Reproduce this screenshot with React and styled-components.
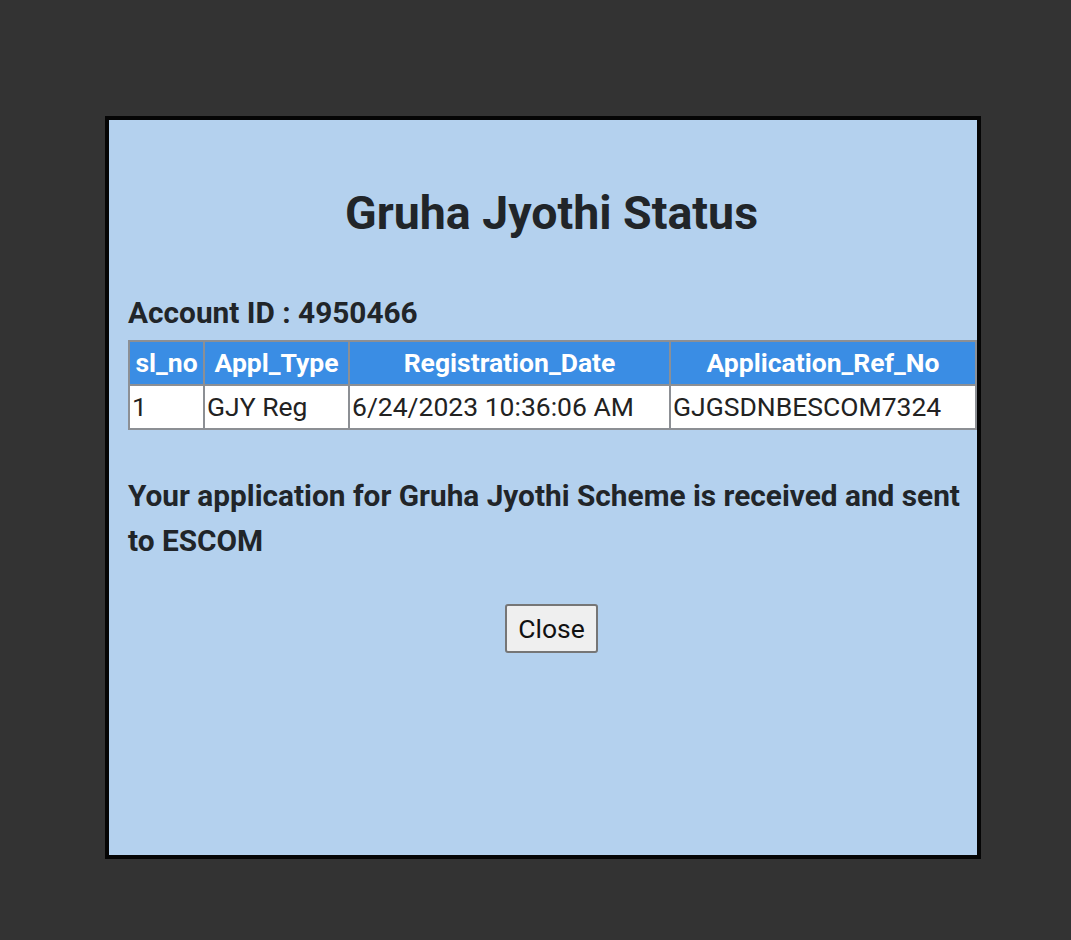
import React from 'react';
import styled, { createGlobalStyle } from 'styled-components';

const GlobalStyle = createGlobalStyle`
  html, body {
    margin: 0;
    padding: 0;
    background: #333333;
  }
`;

const Page = styled.div`
  min-height: 940px;
  box-sizing: border-box;
  padding: 116px 0 0 105px;
  background: #333333;
  font-family: Roboto, "Liberation Sans", sans-serif;
`;

const Modal = styled.div`
  width: 876px;
  height: 743px;
  box-sizing: border-box;
  border: 4px solid #050505;
  background: #b4d1ee;
  padding: 66px 2px 0 19px;
  color: #212529;
`;

const Title = styled.h2`
  margin: 0;
  font-size: 46.5px;
  line-height: 55px;
  font-weight: 700;
  text-align: center;
`;

const AccountLine = styled.div`
  margin-top: 55px;
  font-size: 29.8px;
  line-height: 34px;
  font-weight: 700;
`;

const Table = styled.table`
  margin-top: 10px;
  width: 847px;
  table-layout: fixed;
  border-collapse: collapse;
  border: 2px solid #8c8f94;
`;

const Col = styled.col`
  width: ${(p) => p.w}px;
`;

const HeadCell = styled.th`
  background: #3a8de4;
  color: #ffffff;
  font-size: 26.5px;
  font-weight: 700;
  line-height: 34px;
  padding: 4px 2px;
  border: 2px solid #8c8f94;
  text-align: center;
  white-space: nowrap;
`;

const Cell = styled.td`
  background: #ffffff;
  color: #222222;
  font-size: 26.5px;
  line-height: 36px;
  padding: 3px 2px;
  border: 2px solid #8c8f94;
  text-align: left;
  white-space: nowrap;
`;

const Message = styled.p`
  margin: 43px 0 0;
  font-size: 29.8px;
  line-height: 45px;
  font-weight: 700;
`;

const Actions = styled.div`
  display: flex;
  justify-content: center;
  margin-top: 41px;
`;

const CloseButton = styled.button`
  font-family: Roboto, "Liberation Sans", sans-serif;
  font-size: 26.5px;
  color: #111111;
  background: #efefef;
  border: 2px solid #767676;
  border-radius: 3px;
  width: 93px;
  height: 49px;
  padding: 0;
`;

const columns = [
  { key: 'sl_no', w: 75 },
  { key: 'Appl_Type', w: 145 },
  { key: 'Registration_Date', w: 321 },
  { key: 'Application_Ref_No', w: 306 },
];

const rows = [
  ['1', 'GJY Reg', '6/24/2023 10:36:06 AM', 'GJGSDNBESCOM7324'],
];

export default function App() {
  return (
    <>
      <GlobalStyle />
      <Page>
        <Modal>
          <Title>Gruha Jyothi Status</Title>
          <AccountLine>Account ID : 4950466</AccountLine>
          <Table>
            <colgroup>
              {columns.map((c) => (
                <Col key={c.key} w={c.w} />
              ))}
            </colgroup>
            <thead>
              <tr>
                {columns.map((c) => (
                  <HeadCell key={c.key}>{c.key}</HeadCell>
                ))}
              </tr>
            </thead>
            <tbody>
              {rows.map((r, i) => (
                <tr key={i}>
                  {r.map((v, j) => (
                    <Cell key={j}>{v}</Cell>
                  ))}
                </tr>
              ))}
            </tbody>
          </Table>
          <Message>
            Your application for Gruha Jyothi Scheme is received and sent to ESCOM
          </Message>
          <Actions>
            <CloseButton>Close</CloseButton>
          </Actions>
        </Modal>
      </Page>
    </>
  );
}
